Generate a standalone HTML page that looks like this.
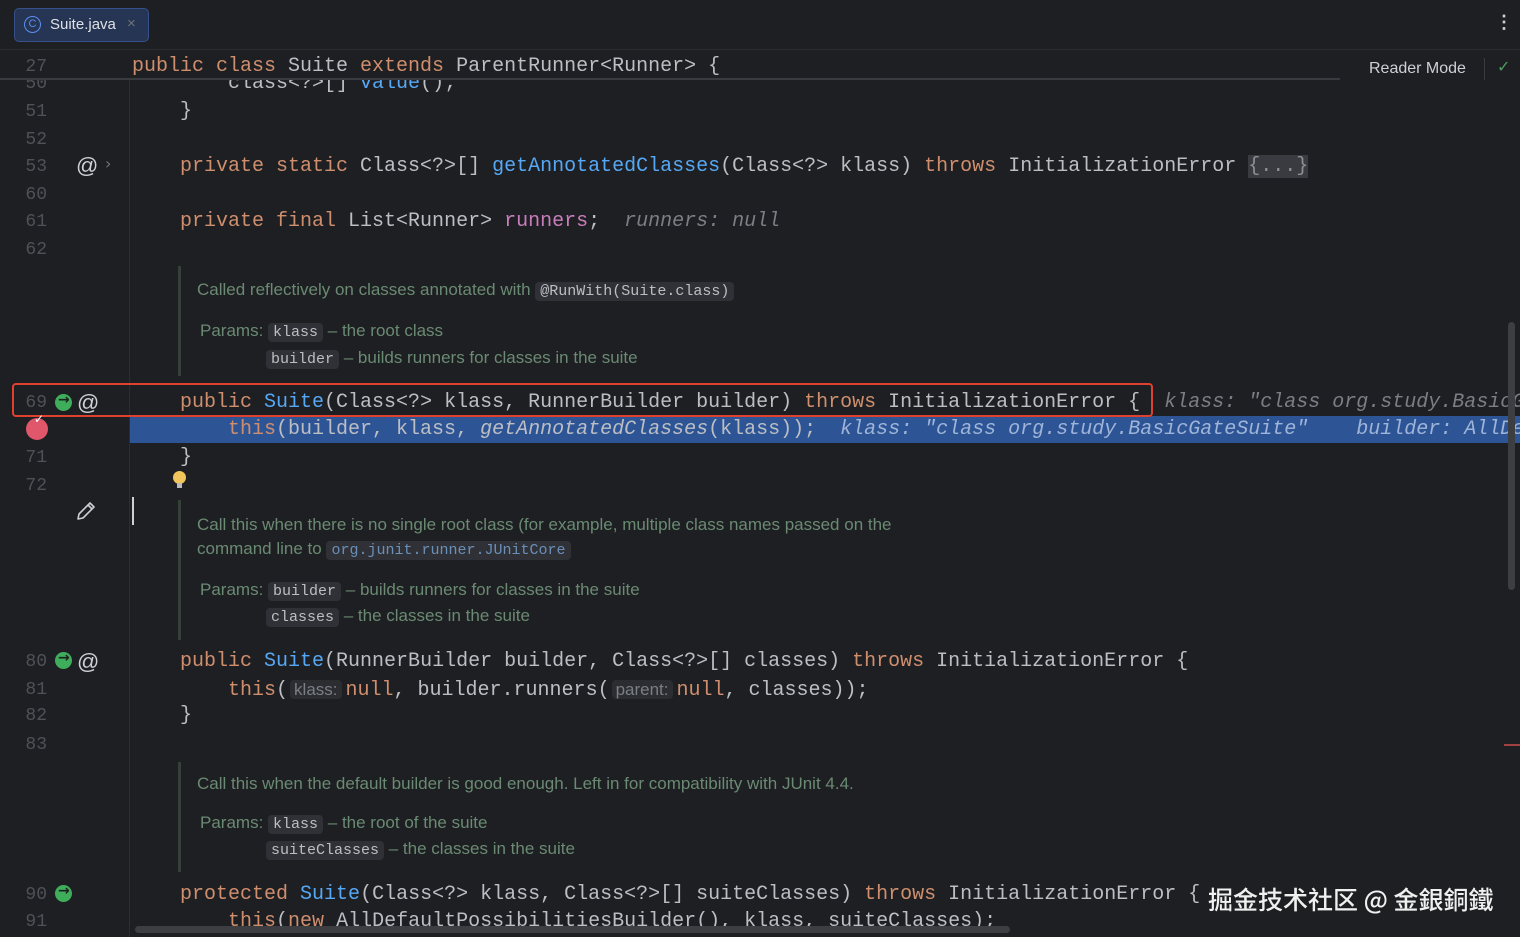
<!DOCTYPE html>
<html><head><meta charset="utf-8"><style>
*{margin:0;padding:0;box-sizing:border-box}
html,body{width:1520px;height:937px;overflow:hidden}
body{background:#1e1f22;position:relative;font-family:"Liberation Mono",monospace;color:#bcbec4}
.a{position:absolute;white-space:pre}
.c{position:absolute;left:132px;right:0;overflow:hidden;height:28px;line-height:28px;font-size:20px;white-space:pre;font-family:"Liberation Mono",monospace}
.n{position:absolute;left:0;width:47px;text-align:right;height:28px;line-height:28px;font-size:18px;color:#4e5157}
.k{color:#cf8e6d}.m{color:#56a8f5}.f{color:#c77dbb}.h{color:#7a7e85;font-style:italic}
.d{position:absolute;left:197px;font-family:"Liberation Sans",sans-serif;font-size:17px;color:#6a8a73;white-space:pre;line-height:24px}
.cd{font-family:"Liberation Mono",monospace;font-size:15px;background:#2f3136;color:#bcbec4;border-radius:4px;padding:1px 5px}
.bar{position:absolute;left:178px;width:3px;background:#344038}
.hint{font-family:"Liberation Sans",sans-serif;font-size:17px;background:#2b2d30;color:#7a7e85;border-radius:4px;padding:0 4px;margin:0 4px 0 2px}
.run{position:absolute;width:17px;height:17px;border-radius:50%;background:#3fae5b}
.at{position:absolute;font-family:"Liberation Sans",sans-serif;font-size:22px;color:#ced0d6;line-height:24px}
</style></head><body>
<div class="a" style="left:0;top:0;width:1520px;height:50px;background:#1e1f22;border-bottom:1px solid #2b2d30"></div>
<div class="a" style="left:14px;top:8px;width:135px;height:34px;background:#253553;border:1px solid #35508a;border-radius:5px"></div>
<div class="a" style="left:24px;top:16px;width:17px;height:17px;border:1.5px solid #5b8ef0;border-radius:50%;color:#5b8ef0;font:11px 'Liberation Sans',sans-serif;text-align:center;line-height:14px">C</div>
<div class="a" style="left:50px;top:16px;font:15px 'Liberation Sans',sans-serif;color:#dfe1e5">Suite.java</div>
<div class="a" style="left:127px;top:15px;font:15px 'Liberation Sans',sans-serif;color:#6f737a">×</div>
<div class="a" style="left:1495px;top:12px;font:bold 18px 'Liberation Sans',sans-serif;color:#ced0d6">⋮</div>
<div class="a" style="left:129px;top:78px;width:1px;height:859px;background:#2b2d30"></div>
<div class="c" style="top:70px"><span>        class&lt;?&gt;[] </span><span class="m">value</span>();</div>
<div class="n" style="top:70px">50</div>
<div class="a" style="left:0;top:51px;width:1340px;height:29px;background:#1e1f22;border-bottom:2px solid #393b40"></div>
<div class="n" style="top:53px">27</div>
<div class="c" style="top:53px;right:180px"><span class="k">public class </span>Suite <span class="k">extends </span>ParentRunner&lt;Runner&gt; {</div>
<div class="a" style="left:1369px;top:60px;font:16px 'Liberation Sans',sans-serif;color:#ced0d6">Reader Mode</div>
<div class="a" style="left:1484px;top:58px;width:1px;height:22px;background:#393b40"></div>
<div class="a" style="left:1497px;top:57px;font:16px 'DejaVu Sans',sans-serif;color:#4e9a63">✓</div>
<div class="n" style="top:98px">51</div><div class="c" style="top:98px">    }</div>
<div class="n" style="top:126px">52</div>
<div class="n" style="top:153px">53</div>
<div class="at" style="left:76px;top:154px">@</div><div class="a" style="left:105px;top:154px;font:16px 'DejaVu Sans';color:#6f737a">›</div>
<div class="c" style="top:153px">    <span class="k">private static </span>Class&lt;?&gt;[] <span class="m">getAnnotatedClasses</span>(Class&lt;?&gt; klass) <span class="k">throws </span>InitializationError <span style="background:#393b40;color:#8c8f94">{...}</span></div>
<div class="n" style="top:181px">60</div>
<div class="n" style="top:208px">61</div>
<div class="c" style="top:208px">    <span class="k">private final </span>List&lt;Runner&gt; <span class="f">runners</span>;  <span class="h">runners: null</span></div>
<div class="n" style="top:236px">62</div>
<div class="bar" style="top:266px;height:110px"></div>
<div class="d" style="top:278px">Called reflectively on classes annotated with <span class="cd">@RunWith(Suite.class)</span></div>
<div class="d" style="top:319px;left:200px">Params: <span class="cd">klass</span> – the root class</div>
<div class="d" style="top:346px;left:266px"><span class="cd">builder</span> – builds runners for classes in the suite</div>
<div class="a" style="left:130px;top:416px;width:1390px;height:27px;background:#2d5596"></div>
<div class="n" style="top:389px">69</div>
<div class="run" style="left:55px;top:394px"></div><div class="a" style="left:58px;top:392px;font:bold 14px 'DejaVu Sans';color:#1e1f22">→</div>
<div class="at" style="left:77px;top:391px">@</div>
<div class="c" style="top:389px">    <span class="k">public </span><span class="m">Suite</span>(Class&lt;?&gt; klass, RunnerBuilder builder) <span class="k">throws </span>InitializationError {  <span class="h">klass: "class org.study.BasicGateSuite"</span></div>
<div class="a" style="left:12px;top:383px;width:1141px;height:34px;border:2.5px solid #e0412f;border-radius:4px"></div>
<div class="a" style="left:26px;top:418px;width:22px;height:22px;border-radius:50%;background:#e0566b"></div>
<div class="a" style="left:34px;top:412px;font:bold 12px 'DejaVu Sans';color:#fff">✓</div>
<div class="c" style="top:416px">        <span class="k">this</span>(builder, klass, <span style="font-style:italic">getAnnotatedClasses</span>(klass));  <span style="font-style:italic;color:#9fb4d8">klass: "class org.study.BasicGateSuite"    builder: AllDefaultPossibilitiesBuilder</span></div>
<div class="n" style="top:444px">71</div><div class="c" style="top:444px">    }</div>
<div class="n" style="top:472px">72</div>
<div class="a" style="left:173px;top:471px;width:13px;height:13px;border-radius:50%;background:#f2c55c"></div>
<div class="a" style="left:177px;top:483px;width:5px;height:5px;background:#bbb"></div>
<svg class="a" style="left:75px;top:500px" width="22" height="22" viewBox="0 0 22 22"><path d="M3 19 L4 14 L15 3 L19 7 L8 18 Z M13 5 L17 9" fill="none" stroke="#ced0d6" stroke-width="1.6" stroke-linejoin="round"/></svg>
<div class="a" style="left:132px;top:497px;width:2px;height:28px;background:#ced0d6"></div>
<div class="bar" style="top:500px;height:140px"></div>
<div class="d" style="top:513px">Call this when there is no single root class (for example, multiple class names passed on the</div>
<div class="d" style="top:537px">command line to <span class="cd" style="color:#6a8fb8">org.junit.runner.JUnitCore</span></div>
<div class="d" style="top:578px;left:200px">Params: <span class="cd">builder</span> – builds runners for classes in the suite</div>
<div class="d" style="top:604px;left:266px"><span class="cd">classes</span> – the classes in the suite</div>
<div class="n" style="top:648px">80</div>
<div class="run" style="left:55px;top:652px"></div><div class="a" style="left:58px;top:650px;font:bold 14px 'DejaVu Sans';color:#1e1f22">→</div>
<div class="at" style="left:77px;top:650px">@</div>
<div class="c" style="top:648px">    <span class="k">public </span><span class="m">Suite</span>(RunnerBuilder builder, Class&lt;?&gt;[] classes) <span class="k">throws </span>InitializationError {</div>
<div class="n" style="top:676px">81</div>
<div class="c" style="top:676px">        <span class="k">this</span>(<span class="hint">klass:</span><span class="k">null</span>, builder.runners(<span class="hint">parent:</span><span class="k">null</span>, classes));</div>
<div class="n" style="top:702px">82</div><div class="c" style="top:702px">    }</div>
<div class="n" style="top:731px">83</div>
<div class="a" style="left:1504px;top:744px;width:16px;height:2px;background:#a04040"></div>
<div class="bar" style="top:762px;height:110px"></div>
<div class="d" style="top:772px">Call this when the default builder is good enough. Left in for compatibility with JUnit 4.4.</div>
<div class="d" style="top:811px;left:200px">Params: <span class="cd">klass</span> – the root of the suite</div>
<div class="d" style="top:837px;left:266px"><span class="cd">suiteClasses</span> – the classes in the suite</div>
<div class="n" style="top:881px">90</div>
<div class="run" style="left:55px;top:885px"></div><div class="a" style="left:58px;top:883px;font:bold 14px 'DejaVu Sans';color:#1e1f22">→</div>
<div class="c" style="top:881px">    <span class="k">protected </span><span class="m">Suite</span>(Class&lt;?&gt; klass, Class&lt;?&gt;[] suiteClasses) <span class="k">throws </span>InitializationError {</div>
<div class="n" style="top:908px">91</div>
<div class="c" style="top:908px">        <span class="k">this</span>(<span class="k">new </span>AllDefaultPossibilitiesBuilder(), klass, suiteClasses);</div>
<div class="a" style="left:1508px;top:322px;width:7px;height:268px;background:#3c3e42;border-radius:4px"></div>
<div class="a" style="left:135px;top:926px;width:875px;height:7px;background:#3c3e42;border-radius:4px"></div>
<div class="a" style="left:1208px;top:881px;font:500 25px 'Noto Sans CJK SC',sans-serif;color:#f0f0f0">掘金技术社区 @ 金銀銅鐵</div>
</body></html>
